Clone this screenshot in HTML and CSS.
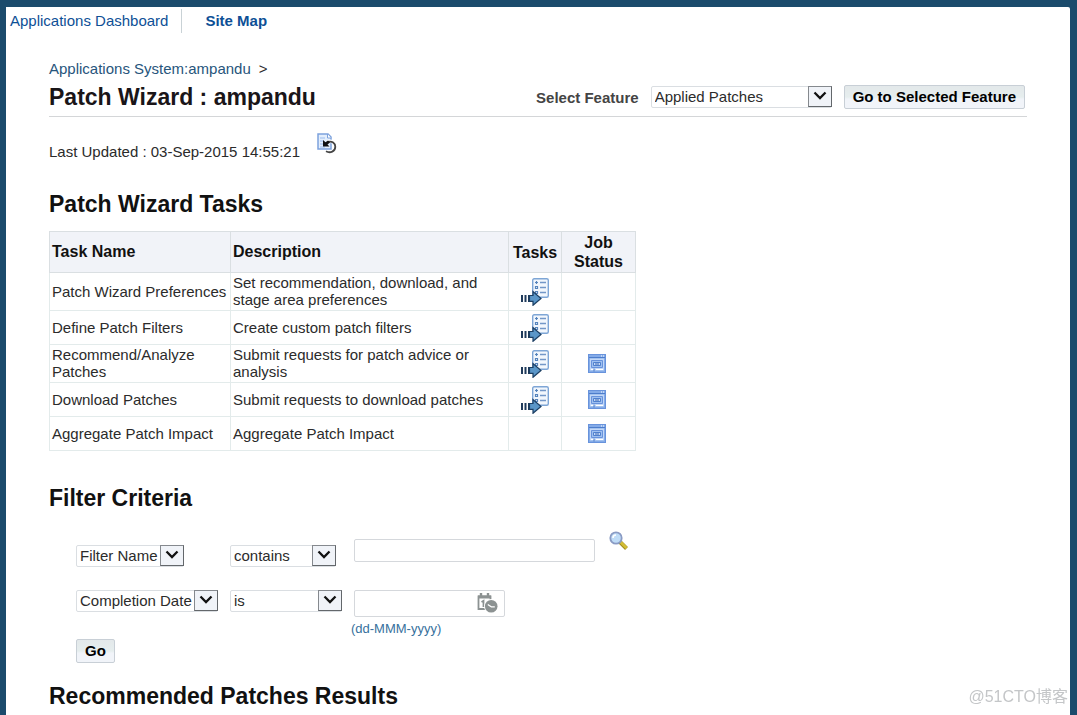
FILE: index.html
```html
<!DOCTYPE html>
<html lang="en">
<head>
<meta charset="utf-8">
<title>Patch Wizard : ampandu</title>
<link rel="stylesheet" href="styles.css">
</head>
<body>
<svg class="defs" width="0" height="0" aria-hidden="true">
  <symbol id="chevron" viewBox="0 0 22 19">
    <path d="M5.500 5.500l5.500 5.500 5.500-5.500" fill="none" stroke="#111" stroke-width="2.300"/>
  </symbol>
  <symbol id="task" viewBox="0 0 28 28">
    <rect x="11.700" y=".7" width="15.600" height="18.600" rx="1.500" fill="#f2f7fd" stroke="#7ea6d6" stroke-width="1.400"/>
    <path d="M14 4.500h3M15.500 3v3M14.500 8.500h2v2h-2zM14.500 13.500h2v2h-2z" fill="none" stroke="#5684bc" stroke-width="1.200"/>
    <path d="M19 4.500h6M19 9.500h6M19 14.500h6" stroke="#7397c8" stroke-width="1.400"/>
    <path d="M1 17v7M4.500 17v7M8 17v7" stroke="#1f3a5a" stroke-width="2"/>
    <path d="M8.500 17.500H12v-4l8 7-8 6.800v-4H8.500z" fill="#5a96c8" stroke="#1c3f63" stroke-width="1.200"/>
  </symbol>
  <symbol id="job" viewBox="0 0 18 19">
    <rect x=".5" y=".5" width="17" height="18" fill="#84abe8" stroke="#6893dc"/>
    <path d="M1 3.500h16" stroke="#4d7dcb"/>
    <path d="M13 2h1M15 2h1" stroke="#fff"/>
    <path d="M2 4.500h14v12H2z" fill="#c3d8f7"/>
    <path d="M3.500 6.500h11v7h-11z" fill="#9fc0f0" stroke="#6893dc"/>
    <path d="M5.500 8.500h7v3h-7z" fill="#c3d8f7" stroke="#4f80ce"/>
    <path d="M7 10h4" stroke="#3c69b5"/>
    <path d="M3 15.500h3M8 15.500h7" stroke="#fff"/>
    <path d="M6 14.500v3" stroke="#4d7dcb"/>
  </symbol>
</svg>
<div class="page">
  <nav class="topnav">
    <a href="#dashboard">Applications Dashboard</a>
    <a class="current" href="#map">Site Map</a>
  </nav>
  <main class="content">
    <div class="crumbs"><a href="#system">Applications System:ampandu</a><span>&gt;</span></div>
    <header class="titlebar">
      <h1>Patch Wizard : ampandu</h1>
      <form class="feature">
        <label for="feature">Select Feature</label>
        <span class="pick pick-feature"><select id="feature"><option>Applied Patches</option></select><svg class="drop"><use href="#chevron"/></svg></span>
        <button class="btn" type="button">Go to Selected Feature</button>
      </form>
    </header>
    <div class="updated">
      <span>Last Updated : 03-Sep-2015 14:55:21</span>
      <button class="iconbtn" type="button" aria-label="Refresh">
        <svg width="20" height="21" viewBox="0 0 20 21">
          <path d="M1 1h10l3 3v12H1z" fill="#e3eefc" stroke="#7da2dd" stroke-width="1.500"/>
          <path d="M10.500 1v4H14" fill="#fff" stroke="#7da2dd"/>
          <path d="M3 5h5M3 8h3M3 11h3M3 14h5" stroke="#9bbcee"/>
          <path d="M10 9c4-2 8.800 0 8.800 5s-5 7-9 5" fill="none" stroke="#fff" stroke-width="3.500"/>
          <path d="M11 8.800c4-1 7.300 1.200 7.300 5 0 4.700-5 6.700-9.300 4.500" fill="none" stroke="#444" stroke-width="1.800"/>
          <path d="M6 7v6.500h6.500l-2-2 2.500-2-2-2-2.500 1.800z" fill="#111"/>
        </svg>
      </button>
    </div>

    <h2>Patch Wizard Tasks</h2>
    <table class="tasks">
      <colgroup><col class="c-name"><col class="c-desc"><col class="c-task"><col class="c-job"></colgroup>
      <thead>
        <tr><th scope="col">Task Name</th><th scope="col">Description</th><th class="mid" scope="col">Tasks</th><th class="mid" scope="col">Job Status</th></tr>
      </thead>
      <tbody>
        <tr class="tall"><td>Patch Wizard Preferences</td><td>Set recommendation, download, and stage area preferences</td><td class="mid"><svg class="i-task"><use href="#task"/></svg></td><td></td></tr>
        <tr><td>Define Patch Filters</td><td>Create custom patch filters</td><td class="mid"><svg class="i-task"><use href="#task"/></svg></td><td></td></tr>
        <tr class="tall"><td>Recommend/Analyze Patches</td><td>Submit requests for patch advice or analysis</td><td class="mid"><svg class="i-task"><use href="#task"/></svg></td><td class="mid job"><svg class="i-job"><use href="#job"/></svg></td></tr>
        <tr><td>Download Patches</td><td>Submit requests to download patches</td><td class="mid"><svg class="i-task"><use href="#task"/></svg></td><td class="mid job"><svg class="i-job"><use href="#job"/></svg></td></tr>
        <tr><td>Aggregate Patch Impact</td><td>Aggregate Patch Impact</td><td></td><td class="mid job"><svg class="i-job"><use href="#job"/></svg></td></tr>
      </tbody>
    </table>

    <h2>Filter Criteria</h2>
    <form class="filters">
      <span class="pick pick-name"><select aria-label="First field"><option>Filter Name</option></select><svg class="drop"><use href="#chevron"/></svg></span>
      <span class="pick pick-contains"><select aria-label="First condition"><option>contains</option></select><svg class="drop"><use href="#chevron"/></svg></span>
      <div class="search">
        <input class="box" type="text" aria-label="Filter name value">
        <button class="iconbtn" type="button" aria-label="Search">
          <svg width="20" height="20" viewBox="0 0 20 20">
            <path d="M11 11l6.500 6.500" stroke="#a08c1e" stroke-width="4"/>
            <path d="M11.500 11l6 6" stroke="#d3bd36" stroke-width="2.600"/>
            <circle cx="7" cy="7" r="5.700" fill="#bfdcf7" stroke="#8a9bc4" stroke-width="1.800"/>
            <path d="M4 7a3 3 0 0 1 3-3" fill="none" stroke="#fff" stroke-width="1.500"/>
          </svg>
        </button>
      </div>
      <span class="pick pick-date"><select aria-label="Second field"><option>Completion Date</option></select><svg class="drop"><use href="#chevron"/></svg></span>
      <span class="pick pick-is"><select aria-label="Second condition"><option>is</option></select><svg class="drop"><use href="#chevron"/></svg></span>
      <div class="date">
        <div class="box datebox">
          <input type="text" aria-label="Completion date" aria-describedby="hint">
          <button class="iconbtn" type="button" aria-label="Pick date">
            <svg width="21" height="20" viewBox="0 0 21 20">
              <path d="M1.500 3.500h12v12.500h-12z" fill="#fff" stroke="#8c9292" stroke-width="1.800"/>
              <path d="M1 2.500h13v3H1z" fill="#8c9292"/>
              <path d="M4 0v5M11 0v5" stroke="#8c9292" stroke-width="2.400"/>
              <path d="M4.500 9l2-1.200V14" fill="none" stroke="#8c9292" stroke-width="1.800"/>
              <circle cx="14.200" cy="13.200" r="7.200" fill="#fff"/>
              <circle cx="14.200" cy="13.200" r="6.300" fill="#8c9292"/>
              <path d="M10.800 11.500l3.500 2.300h3.500" fill="none" stroke="#fff" stroke-width="1.200"/>
            </svg>
          </button>
        </div>
        <span class="hint" id="hint">(dd-MMM-yyyy)</span>
      </div>
      <button class="btn go" type="button">Go</button>
    </form>

    <h2>Recommended Patches Results</h2>
  </main>
  <div class="mark">@51CTO博客</div>
</div>
</body>
</html>
```
FILE: styles.css
```css
* { box-sizing: border-box; }

body {
  margin: 0;
  padding: 7px 7px 0 6px;
  background: #1b4b6c;
  color: #2b2b2b;
  font: 15px/17px "Liberation Sans", Arial, sans-serif;
}

.defs { position: absolute; }

.page {
  min-height: calc(100vh - 7px);
  background: #fff;
  border-top-right-radius: 2px;
}

a { color: #0e5096; text-decoration: none; }

.topnav {
  display: flex;
  padding: 2px 4px 1px;
  line-height: 24px;
}
.topnav .current {
  margin-left: 13px;
  padding-left: 23px;
  border-left: 1px solid #c9d2d6;
  font-weight: bold;
}

.content { padding: 26px 43px 0 43px; }

.crumbs { display: flex; gap: 8px; }
.crumbs a { color: #27557c; }

h1, h2 {
  margin: 0;
  color: #1a1518;
  font-weight: bold;
  font-size: 23px;
  line-height: 28px;
}
h2 { color: #111; }

.titlebar {
  display: flex;
  justify-content: space-between;
  align-items: center;
  height: 40px;
  padding: 1px 2px 0 0;
  border-bottom: 1px solid #d4d6d8;
}
.feature { display: flex; align-items: center; }
.feature label { margin-right: 12px; color: #444; font-weight: bold; }
.feature .btn { margin-left: 12px; }

.btn {
  height: 24px;
  padding: 0 8px;
  border: 1px solid #c8cfd6;
  border-radius: 2px;
  background: linear-gradient(#e3e8ea, #e6eeee 50%, #f1f4f9 60%);
  color: #000;
  font: bold 15px/20px "Liberation Sans", Arial, sans-serif;
}

.pick { position: relative; display: block; height: 22px; }
.pick select {
  width: 100%;
  height: 22px;
  padding: 0 0 2px 3px;
  border: 1px solid #dadee2;
  border-radius: 2px;
  background: #fff;
  color: #2b2b2b;
  font: inherit;
  appearance: none;
}
.drop {
  position: absolute;
  top: 0;
  right: 0;
  width: 24px;
  height: 21px;
  border: 1px solid #85898e;
  border-right-color: #63676b;
  border-bottom-color: #63676b;
  background: #f0f3f8;
  pointer-events: none;
}
.pick-feature { width: 181px; }
.pick-name { width: 108px; }
.pick-contains { width: 106px; }
.pick-date { width: 142px; }
.pick-is { width: 112px; }

.iconbtn {
  display: block;
  padding: 0;
  border: 0;
  background: none;
}
.iconbtn svg { display: block; }

.updated {
  display: flex;
  align-items: flex-end;
  gap: 17px;
  padding-top: 16px;
  margin-bottom: 30px;
}
.updated .iconbtn { margin-bottom: 6px; }

.tasks {
  width: 587px;
  margin: 13px 0 33px;
  border-collapse: collapse;
  table-layout: fixed;
}
.c-name { width: 181px; }
.c-desc { width: 278px; }
.c-task { width: 53px; }
.tasks th, .tasks td { height: 34px; padding: 0 2px 1px; text-align: left; }
.tasks .tall td { height: 38px; }
.tasks th {
  height: 41px;
  border: 1px solid #dadfe2;
  background: #f1f3f8;
  color: #111;
  font-size: 16px;
  line-height: 19px;
}
.tasks td { border: 1px solid #e3ebeb; }
.tasks .mid { padding: 0; text-align: center; }
.tasks .job { padding-right: 4px; }
.i-task, .i-job { display: block; margin: 0 auto; }
.i-task { width: 28px; height: 28px; }
.i-job { width: 18px; height: 19px; }

.filters {
  display: grid;
  grid-template-columns: 154px 124px 1fr;
  align-items: start;
  padding: 19px 0 0 27px;
  margin-bottom: 19px;
}
.filters > .pick-name, .filters > .pick-contains { margin-top: 14px; }
.box {
  height: 23px;
  border: 1px solid #d5d8dc;
  border-radius: 2px;
  background: #fff;
}
.search { display: flex; align-items: flex-start; gap: 14px; height: 59px; }
.search .box { width: 241px; margin-top: 8px; }
.date { display: flex; flex-direction: column; }
.datebox {
  display: flex;
  align-items: flex-start;
  width: 151px;
  height: 27px;
  padding: 2px 6px 0 2px;
}
.datebox input { flex: 1; min-width: 0; height: 21px; border: 0; font: inherit; }
.hint {
  margin-top: 3px;
  margin-left: -3px;
  color: #37719d;
  font-size: 13px;
}
.go { width: 39px; margin-top: 2px; }

.mark {
  position: fixed;
  right: 9px;
  bottom: 8px;
  color: #c4c6c8;
  font: 16px/20px "Liberation Sans", "Noto Sans CJK SC", sans-serif;
}
```
